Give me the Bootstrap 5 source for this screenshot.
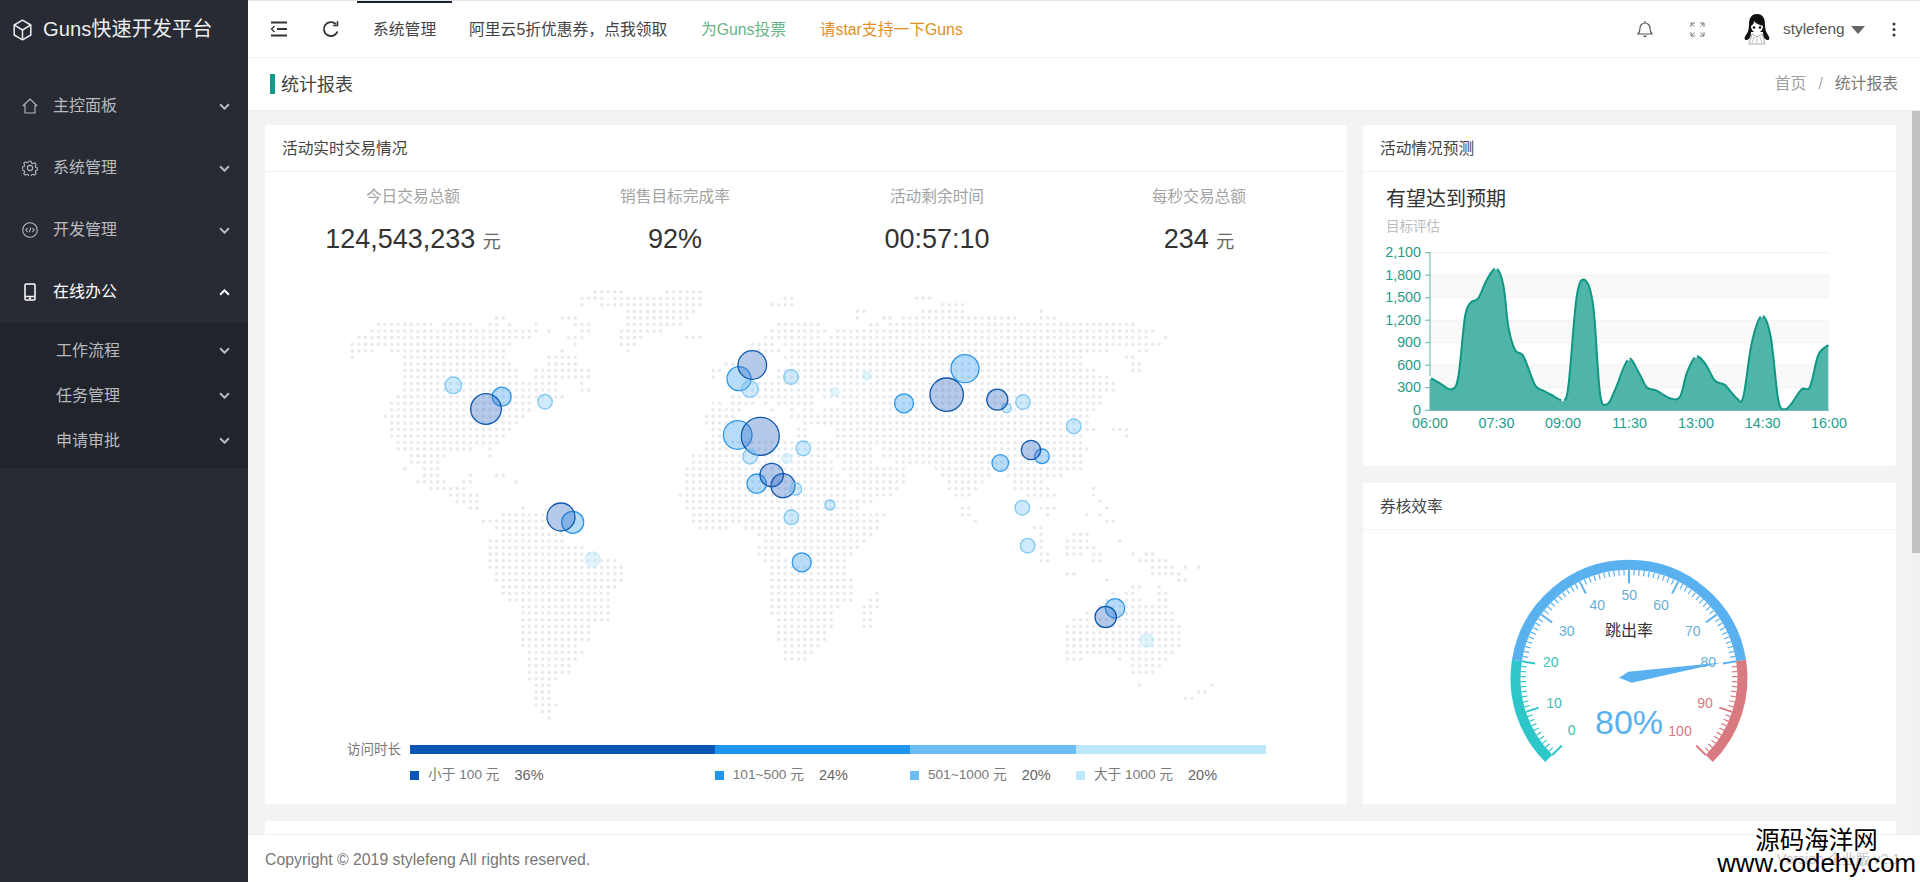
<!DOCTYPE html>
<html lang="zh-CN">
<head>
    <meta charset="UTF-8">
    <meta name="viewport" content="width=device-width, initial-scale=1.0">
    <title>统计报表 - Guns快速开发平台</title>
    <link href="https://cdn.jsdelivr.net/npm/bootstrap@5.3.3/dist/css/bootstrap.min.css" rel="stylesheet">
    <style>
        html, body { height: 100%; }
        body { font-family: "Liberation Sans", "Noto Sans CJK SC", sans-serif; background: #f3f3f3; color: #333; overflow: hidden; }
        svg { display: block; }

        .side { width: 248px; background: #282b33; color: #b8babf; }
        .side-logo { height: 58px; margin-bottom: 17px; padding: 1px 0 0 13px; gap: 11px; color: #eceded; font-size: 20.2px; }
        .side-item { height: 62px; padding: 0 18px 0 22px; gap: 15px; font-size: 16px; }
        .side-item.open { color: #fff; }
        .side-sub { background: #22242c; padding: 5px 0; }
        .side-sub > div { height: 45px; padding: 0 18px 0 56px; font-size: 16px; }
        .chev { margin-left: auto; width: 11px; height: 7px; }
        .main-col { min-width: 0; }

        .top { height: 58px; padding-left: 5px; background: #fff; border-top: 1px solid #e6e6e6; border-bottom: 1px solid #f1f1f1; }
        .top-ico { width: 52px; }
        .top-link { padding: 2px 16.8px 0; font-size: 15.8px; color: #444; }
        .top-link.active { padding: 2px 16px 0; box-shadow: inset 0 2px 0 #1a2233; }
        .link-green { color: #65b588; }
        .link-orange { color: #df8f25; }
        .top-user { width: 145px; padding-left: 20px; font-size: 15.4px; color: #555; }
        .top-avatar { margin-right: 12px; }
        .top-caret { width: 0; height: 0; margin-left: 6px; margin-top: 2px; border: 7px solid transparent; border-top: 8px solid #666; border-bottom: 0; }

        .crumbs { height: 53px; background: #fff; border-bottom: 1px solid #ececec; padding: 0 22px 0 0; }
        .crumbs-title { border-left: 5px solid #0f9d8a; padding-left: 6px; height: 20px; line-height: 22px; margin-left: 22px; font-size: 18px; color: #444; }
        .crumbs .breadcrumb { font-size: 15.8px; --bs-breadcrumb-item-padding-x: .75rem; --bs-breadcrumb-divider-color: #aaa; }
        .crumbs .breadcrumb-item { color: #a0a0a0; }
        .crumbs .breadcrumb-item.active { color: #777; }

        .page { padding: 14px 24px 16px 17px; overflow: hidden; }
        .page-bar { position: absolute; top: 0; right: 0; bottom: 0; width: 8px; background: #f1f1f1; }
        .page-thumb { height: 442px; background: #c1c1c1; }

        .box { border: 0; border-radius: 2px; }
        .box .card-header { height: 47px; padding: 0 17px; background: #fff; border-bottom: 1px solid #f3f3f3; font-size: 15.7px; line-height: 48px; color: #444; }
        .box-main { height: 679px; }
        .box-plan { height: 341px; }
        .box-rate { height: 321px; margin-top: 17px; }
        .box-next { height: 456px; margin-top: 17px; }

        .stats { height: 108px; padding: 13px 17px 0; }
        .stat-label { font-size: 15.7px; line-height: 24px; color: #a3a3a3; }
        .stat-num { font-size: 27px; line-height: 36px; margin-top: 12px; color: #333; }
        .stat-num small { font-size: 18px; color: #666; }

        .legend-label { width: 145px; padding-right: 9px; font-size: 13.5px; line-height: 9px; color: #777; }
        .legend-wrap { margin-top: 10px; padding-right: 81px; }
        .legend-bar { height: 9px; }
        .legend-row { margin-top: 12px; margin-left: 145px; font-size: 13.7px; color: #7a7a7a; line-height: 18px; }
        .legend-row i { width: 9px; height: 9px; margin-right: 9px; }
        .legend-row b { font-weight: 400; font-size: 14.5px; color: #666; margin-left: 15px; }
        .c1 { background: #0a56b4; }
        .c2 { background: #1f96f0; }
        .c3 { background: #6bbdf5; }
        .c4 { background: #bde8fb; }

        .plan-title { margin: 13px 0 0 23px; font-size: 20px; line-height: 28px; color: #333; }
        .plan-sub { margin-left: 23px; font-size: 13.5px; line-height: 27px; color: #bbb; }
        .axis-txt { font-size: 14.3px; fill: #1e9d8a; }
        .g-txt { font-size: 14px; }

        .foot { height: 48px; background: #fff; border-top: 1px solid #eee; padding: 2px 20px 0 17px; font-size: 15.8px; color: #777; }
        .foot-ver { color: #c4c4c4; font-size: 14px; }
        .watermark { position: absolute; right: 4px; bottom: 6px; color: #000; text-align: center; }
        .watermark-cn { font-size: 24.5px; line-height: 19px; }
        .watermark-en { font-size: 25.8px; line-height: 26px; }
    </style>
</head>
<body class="d-flex">
    <aside class="side flex-shrink-0">
        <div class="side-logo d-flex align-items-center">
            <svg width="19" height="22" viewBox="0 0 19 22" fill="none" stroke="currentColor" stroke-width="1.5" stroke-linejoin="round"><path d="M9.5 1.2 17.8 6v10l-8.3 4.8L1.200 16V6z"/><path d="M1.500 6.200 9.500 11l8-4.800M9.500 11v9.500"/></svg>
            <span>Guns快速开发平台</span>
        </div>
        <div class="side-item d-flex align-items-center">
            <svg width="16" height="16" viewBox="0 0 16 16" fill="none" stroke="currentColor" stroke-width="1.100"><path d="M.8 8 8 1l7.200 7M3 7v8h10V7"/></svg>
            <span>主控面板</span>
            <svg class="chev" viewBox="0 0 10 6" fill="none" stroke="currentColor" stroke-width="1.800"><path d="M1 1l4 4 4-4"/></svg>
        </div>
        <div class="side-item d-flex align-items-center">
            <svg width="16" height="16" viewBox="0 0 16 16" fill="none" stroke="currentColor" stroke-width="1.100"><circle cx="8" cy="8" r="2.600"/><path d="M6.800 .8h2.400l.4 2 1.500.7 1.800-1 1.600 1.700-1 1.700.7 1.600 2 .4v2.300l-2 .5-.7 1.500 1 1.800-1.600 1.600-1.800-1-1.500.6-.4 2.100H6.800l-.5-2.100-1.500-.6-1.800 1-1.600-1.600 1-1.800-.6-1.500-2-.5V6.900l2-.4.600-1.600-1-1.700L3 1.500l1.800 1 1.500-.7z" transform="translate(.4 .4) scale(.95)"/></svg>
            <span>系统管理</span>
            <svg class="chev" viewBox="0 0 10 6" fill="none" stroke="currentColor" stroke-width="1.800"><path d="M1 1l4 4 4-4"/></svg>
        </div>
        <div class="side-item d-flex align-items-center">
            <svg width="16" height="16" viewBox="0 0 16 16" fill="none" stroke="currentColor" stroke-width="1.100"><circle cx="8" cy="8" r="7.300"/><path d="M5.600 6 3.800 8l1.800 2M10.400 6l1.800 2-1.800 2M8.800 5.600 7.200 10.400"/></svg>
            <span>开发管理</span>
            <svg class="chev" viewBox="0 0 10 6" fill="none" stroke="currentColor" stroke-width="1.800"><path d="M1 1l4 4 4-4"/></svg>
        </div>
        <div class="side-item open d-flex align-items-center">
            <svg width="16" height="18" viewBox="0 0 16 18" fill="none" stroke="currentColor" stroke-width="1.500"><rect x="3" y="1" width="10" height="16" rx="1"/><path d="M3 13.500h10M7 15.300h2"/></svg>
            <span>在线办公</span>
            <svg class="chev" viewBox="0 0 10 6" fill="none" stroke="currentColor" stroke-width="1.800"><path d="M1 5l4-4 4 4"/></svg>
        </div>
        <div class="side-sub">
            <div class="d-flex align-items-center"><span>工作流程</span><svg class="chev" viewBox="0 0 10 6" fill="none" stroke="currentColor" stroke-width="1.800"><path d="M1 1l4 4 4-4"/></svg></div>
            <div class="d-flex align-items-center"><span>任务管理</span><svg class="chev" viewBox="0 0 10 6" fill="none" stroke="currentColor" stroke-width="1.800"><path d="M1 1l4 4 4-4"/></svg></div>
            <div class="d-flex align-items-center"><span>申请审批</span><svg class="chev" viewBox="0 0 10 6" fill="none" stroke="currentColor" stroke-width="1.800"><path d="M1 1l4 4 4-4"/></svg></div>
        </div>
    </aside>

    <div class="main-col d-flex flex-column flex-grow-1">
        <header class="top d-flex align-items-stretch flex-shrink-0">
            <div class="top-ico d-flex align-items-center justify-content-center">
                <svg width="18" height="16" viewBox="0 0 18 16" fill="none" stroke="#333" stroke-width="1.800"><path d="M1 1.500h16M7 8h10M1 14.500h16"/><path d="M4.500 5 1.500 8l3 3" stroke-width="1.300"/></svg>
            </div>
            <div class="top-ico d-flex align-items-center justify-content-center">
                <svg width="18" height="18" viewBox="0 0 18 18" fill="none" stroke="#333" stroke-width="1.800"><path d="M15.500 11.500A7 7 0 1 1 14 4.200"/><path d="M15.500 1v4.500H11" stroke-width="1.500"/></svg>
            </div>
            <a class="top-link active d-flex align-items-center text-decoration-none">系统管理</a>
            <a class="top-link d-flex align-items-center text-decoration-none">阿里云5折优惠券，点我领取</a>
            <a class="top-link link-green d-flex align-items-center text-decoration-none">为Guns投票</a>
            <a class="top-link link-orange d-flex align-items-center text-decoration-none">请star支持一下Guns</a>
            <div class="ms-auto d-flex align-items-stretch">
                <div class="top-ico d-flex align-items-center justify-content-center">
                    <svg width="16" height="18" viewBox="0 0 16 18" fill="none" stroke="#555" stroke-width="1.200"><path d="M1 14c1.500-1.500 2-2.500 2-6a5 5 0 0 1 10 0c0 3.500.5 4.500 2 6z"/><path d="M6.500 15.500a1.600 1.600 0 0 0 3 0M8 1v2"/></svg>
                </div>
                <div class="top-ico d-flex align-items-center justify-content-center">
                    <svg width="15" height="15" viewBox="0 0 15 15" fill="none" stroke="#777" stroke-width="1"><path d="M1 5V1h4M1 1l3.500 3.500M10 1h4v4M14 1l-3.500 3.500M1 10v4h4M1 14l3.500-3.500M14 10v4h-4M14 14l-3.500-3.500"/></svg>
                </div>
                <div class="top-user d-flex align-items-center">
                    <svg class="top-avatar flex-shrink-0" width="28" height="32" viewBox="0 0 28 32"><path d="M14 1C7 1 6 7 6 12c0 4-1 7-3 10-2 3-2 5 1 5 3-1 4-4 4-8h12c0 4 1 7 4 8 3 0 3-2 1-5-2-3-3-6-3-10 0-5-1-11-8-11z" fill="#111"/><path d="M8 13c2-1 3-3 3-5 2 3 6 4 9 5 0 4-3 7-6 7s-6-3-6-7z" fill="#fff"/><circle cx="11" cy="14.500" r="1.300" fill="#111"/><circle cx="17" cy="14.500" r="1.300" fill="#111"/><path d="M9 21 6 31h16l-3-10-5 3z" fill="#fff" stroke="#999" stroke-width=".8"/><path d="M11 24l-2 6M14 24v6M17 24l2 6" stroke="#aaa" stroke-width=".7"/></svg>
                    <span>stylefeng</span>
                    <span class="top-caret"></span>
                </div>
                <div class="top-ico d-flex align-items-center justify-content-center">
                    <svg width="4" height="15" viewBox="0 0 4 15" fill="#333"><circle cx="2" cy="2" r="1.500"/><circle cx="2" cy="7.500" r="1.500"/><circle cx="2" cy="13" r="1.500"/></svg>
                </div>
            </div>
        </header>

        <div class="crumbs d-flex align-items-center justify-content-between flex-shrink-0">
            <div class="crumbs-title">统计报表</div>
            <ol class="breadcrumb mb-0">
                <li class="breadcrumb-item">首页</li>
                <li class="breadcrumb-item active">统计报表</li>
            </ol>
        </div>

        <main class="page flex-grow-1 position-relative">
            <div class="page-bar"><div class="page-thumb"></div></div>
            <div class="row g-3">
                <div class="col-8">
                    <div class="card box box-main">
                        <div class="card-header">活动实时交易情况</div>
                        <div class="stats row g-0 text-center">
                            <div class="col-3">
                                <div class="stat-label">今日交易总额</div>
                                <div class="stat-num">124,543,233 <small>元</small></div>
                            </div>
                            <div class="col-3">
                                <div class="stat-label">销售目标完成率</div>
                                <div class="stat-num">92%</div>
                            </div>
                            <div class="col-3">
                                <div class="stat-label">活动剩余时间</div>
                                <div class="stat-num">00:57:10</div>
                            </div>
                            <div class="col-3">
                                <div class="stat-label">每秒交易总额</div>
                                <div class="stat-num">234 <small>元</small></div>
                            </div>
                        </div>
                        <svg id="worldMap" width="1082" height="455" viewBox="265 280 1082 455"></svg>
                        <div class="legend-wrap">
                            <div class="d-flex">
                                <div class="legend-label text-end flex-shrink-0">访问时长</div>
                                <div class="legend-bar d-flex flex-grow-1">
                                    <div class="c1" style="width:35.6%"></div>
                                    <div class="c2" style="width:22.8%"></div>
                                    <div class="c3" style="width:19.4%"></div>
                                    <div class="c4" style="width:22.2%"></div>
                                </div>
                            </div>
                            <div class="legend-row d-flex">
                                <div class="d-flex align-items-center" style="width:35.6%"><i class="c1"></i>小于 100 元<b>36%</b></div>
                                <div class="d-flex align-items-center" style="width:22.8%"><i class="c2"></i>101~500 元<b>24%</b></div>
                                <div class="d-flex align-items-center" style="width:19.4%"><i class="c3"></i>501~1000 元<b>20%</b></div>
                                <div class="d-flex align-items-center" style="width:22.2%"><i class="c4"></i>大于 1000 元<b>20%</b></div>
                            </div>
                        </div>
                    </div>
                </div>
                <div class="col-4">
                    <div class="card box box-plan">
                        <div class="card-header">活动情况预测</div>
                        <div class="plan-title">有望达到预期</div>
                        <div class="plan-sub">目标评估</div>
                        <svg id="planChart" width="533" height="200" viewBox="1363 240 533 200">
                            <rect x="1430" y="275" width="399" height="22.500" fill="#f9f9f9"/>
                            <rect x="1430" y="320" width="399" height="22.500" fill="#f9f9f9"/>
                            <rect x="1430" y="365" width="399" height="22.500" fill="#f9f9f9"/>
                            <path d="M1430 252.700H1829M1430 275.200H1829M1430 297.700H1829M1430 320.200H1829M1430 342.700H1829M1430 365.200H1829M1430 387.700H1829" stroke="#f1f1f1"/>
                            <path id="planArea" fill="#4fb5a9"/>
                            <path id="planLine" fill="none" stroke="#0f9783" stroke-width="2"/>
                            <path d="M1430 252V410.300H1829" fill="none" stroke="#5fb5a6"/>
                            <path d="M1425 252.700h5M1425 275.200h5M1425 297.700h5M1425 320.200h5M1425 342.700h5M1425 365.200h5M1425 387.700h5M1425 410.300h5" stroke="#5fb5a6"/>
                            <g id="planDots" fill="#fff"></g>
                            <g class="axis-txt" text-anchor="end">
                                <text x="1421" y="257">2,100</text>
                                <text x="1421" y="280">1,800</text>
                                <text x="1421" y="302">1,500</text>
                                <text x="1421" y="325">1,200</text>
                                <text x="1421" y="347">900</text>
                                <text x="1421" y="370">600</text>
                                <text x="1421" y="392">300</text>
                                <text x="1421" y="415">0</text>
                            </g>
                            <g class="axis-txt" text-anchor="middle">
                                <text x="1430" y="428">06:00</text>
                                <text x="1496.500" y="428">07:30</text>
                                <text x="1563" y="428">09:00</text>
                                <text x="1629.600" y="428">11:30</text>
                                <text x="1696" y="428">13:00</text>
                                <text x="1762.700" y="428">14:30</text>
                                <text x="1829" y="428">16:00</text>
                            </g>
                        </svg>
                    </div>
                    <div class="card box box-rate">
                        <div class="card-header">券核效率</div>
                        <svg id="gauge" width="533" height="273" viewBox="1363 530 533 273">
                            <g id="gaugeArcs" fill="none"></g>
                            <g class="g-txt" text-anchor="middle" fill="#3dbfb5">
                                <text x="1571.700" y="735">0</text>
                                <text x="1554" y="708">10</text>
                                <text x="1550.700" y="667">20</text>
                            </g>
                            <g class="g-txt" text-anchor="middle" fill="#6aaed6">
                                <text x="1566.700" y="636">30</text>
                                <text x="1597.300" y="610">40</text>
                                <text x="1629.300" y="600">50</text>
                                <text x="1661" y="610">60</text>
                                <text x="1692.700" y="636">70</text>
                                <text x="1708.300" y="667">80</text>
                            </g>
                            <g class="g-txt" text-anchor="middle" fill="#d87a80">
                                <text x="1705" y="708">90</text>
                                <text x="1680" y="736">100</text>
                            </g>
                            <polygon points="1722,662.500 1628.300,671.700 1619,677.700 1631.700,682.700" fill="#5ab1ef"/>
                            <text x="1629" y="636" text-anchor="middle" font-size="16" fill="#333">跳出率</text>
                            <text x="1629" y="734" text-anchor="middle" font-size="34" fill="#5ab1ef">80%</text>
                        </svg>
                    </div>
                </div>
            </div>
            <div class="card box box-next"></div>
        </main>

        <footer class="foot d-flex align-items-center justify-content-between flex-shrink-0 position-relative">
            <span>Copyright © 2019 stylefeng All rights reserved.</span>
            <span class="foot-ver">Version 企业版 v2.1</span>
            <div class="watermark">
                <div class="watermark-cn">源码海洋网</div>
                <div class="watermark-en">www.codehy.com</div>
            </div>
        </footer>
    </div>

    <script>
        const NS = 'http://www.w3.org/2000/svg';
        function add(parent, tag, attrs) {
            const el = document.createElementNS(NS, tag);
            for (const k in attrs) el.setAttribute(k, attrs[k]);
            parent.appendChild(el);
            return el;
        }

        // world map: one string per dot row, "from-to" column runs
        const mapRows = [
            '37-41 48-53', '35-38 40-53 66-67 86-88', '35 38-53 64-67 90-93', '42-52 77-78 87-93 105',
            '22-23 32-34 42-51 77 81-82 84-101 105-107', '4-12 14-18 21-22 24 28 34-36 42-50 65-71 79-80 82-119',
            '3-28 30 35-36 41-47 64-72 74-122', '1-27 33-35 41-44 51-53 63-71 73-121 124',
            '0-24 34 41-43 61-64 66-123', '0-3 6-23 32 42 62-65 67-115 120-121', '0 8-23 30-34 66-111 118-119',
            '8-24 30-34 57-58 67-111 119-120', '8-25 28-36 55-56 65-113 119-120', '8-25 28-36 55 65-115',
            '8-31 35 60-116', '8-31 35-36 60-73 75-116', '7-32 58-70 72-114', '6-27 55-56 58-61 63 65-70 75-114',
            '6-27 55-59 64 67 69-70 72-113', '5-26 54-58 67-112', '6-25 54-58 69-112', '6-24 55-56 68-69 74-112 113 116-118',
            '6-23 55-56 68-69 74-111 118', '7-22 54-111', '7-18 21 54-69 71-79 81-112', '9-14 21 52-72 74-79 81-111',
            '9-13 52-73 75-79 83-111', '8 11-13 51-73 75-84 89-111', '11-13 18 22-23 51-74 76-84 90-97 100-108',
            '10-14 17-18 25 51-75 76-84 91-96 101-105', '12-17 51-75 77-83 91-95 101-106 113',
            '15-19 50-75 78-82 92-94 103-107 113', '16-19 51-79 114', '18-19 26 51-77 93-94 105-107 115',
            '23-29 52-81 93-94 106 112 114', '20-29 52-80 95 115-116', '22-29 53-57 60-80 104-105',
            '23-32 62-79 105 110-112', '21-32 63-78 105 109-112 117', '21-35 62-77 105 109-113',
            '21-37 62-65 69-76 105-106 109-111 113-114 119 121-122', '21-40 63-66 70-75 105-106 113-114 120-124',
            '21-41 64-75 122-125 127 129', '22-41 64-75 109-110 122-126', '22-41 64-76 115 126-127',
            '23-40 64-76 119-120 123', '23-39 64-76 80 116 118-119 123-124', '24-39 64-76 79-80 115-120 123-124',
            '26-39 64-74 78-80 114-124', '26-39 64-73 78-79 112 115-125', '26-39 65-73 78-79 110-112 114-125',
            '26-36 65-73 78-79 109-126', '26-36 65-72 109-126', '26-36 65-72 109-126', '26-34 66-71 109-126',
            '27-35 66-70 109-125', '27-34 66-69 109-111 117 119-124', '27-33 119-123', '27-33 119-122', '27-31',
            '28-30 120 131', '28-30 129-130', '28-30 127-128', '28-31', '29-30', '30'
        ];
        const map = document.getElementById('worldMap');
        const dots = add(map, 'g', { fill: '#e7eaef' });
        mapRows.forEach((row, r) => {
            row.split(' ').forEach(run => {
                const [a, b] = run.split('-').map(Number);
                for (let c = a; c <= (b === undefined ? a : b); c++) {
                    add(dots, 'circle', { cx: (352.3 + 6.56 * c).toFixed(1), cy: (291.7 + 6.56 * r).toFixed(1), r: 1.8 });
                }
            });
        });

        // bubbles: x, y, r, kind
        const kinds = {
            d: { fill: 'rgba(30,90,190,.33)', stroke: '#0f58ac' },
            m: { fill: 'rgba(35,150,240,.33)', stroke: '#2b97e8' },
            l: { fill: 'rgba(115,195,245,.35)', stroke: 'rgba(100,190,240,.8)' },
            f: { fill: 'rgba(170,225,250,.35)', stroke: 'rgba(170,225,250,.4)' }
        };
        [
            [453.3, 385.3, 8.3, 'l'], [501.7, 396.7, 9.5, 'm'], [486, 409, 15.3, 'd'], [545, 401.7, 7.3, 'l'],
            [739, 378.7, 12, 'm'], [750, 389, 8.3, 'l'], [752.3, 365, 14.3, 'd'], [791, 377, 7.3, 'l'],
            [737.7, 435, 14.3, 'm'], [760.3, 436.3, 19, 'd'], [750, 456.7, 7.3, 'l'], [803.3, 448.3, 7.3, 'l'],
            [756.7, 483.7, 9.7, 'm'], [771.7, 475, 11.7, 'd'], [783, 485.7, 12, 'd'], [795.7, 489, 6, 'l'], [786.7, 458.3, 5, 'f'],
            [965, 368.7, 14, 'm'], [946.7, 394.7, 16.7, 'd'], [904, 403.3, 9.5, 'm'], [1006.7, 408, 4.7, 'l'], [997.3, 399.7, 10.5, 'd'],
            [1023, 402, 7.3, 'l'], [1073.7, 426.3, 7.3, 'l'], [1042, 456.3, 7.3, 'm'], [1031, 450, 9.7, 'd'], [1000.3, 463, 8.3, 'm'],
            [866.7, 375.7, 4, 'f'], [835, 392, 4, 'f'], [1022.3, 507.7, 7.3, 'l'], [830, 505, 5, 'l'],
            [572.7, 522.3, 11, 'm'], [561, 517, 14, 'd'], [592.7, 559.3, 7.5, 'f'], [791.3, 517.3, 7.3, 'l'], [801.7, 562.3, 9.5, 'm'],
            [1027.7, 545.7, 7.3, 'l'], [1115, 608.3, 9.7, 'm'], [1105.7, 617, 10.7, 'd'], [1146.7, 640.3, 6.7, 'f']
        ].forEach(([x, y, r, k]) => {
            add(map, 'circle', { cx: x, cy: y, r: r, fill: kinds[k].fill, stroke: kinds[k].stroke, 'stroke-width': 1.3 });
        });

        // forecast curve, points read off the picture in real px
        const curve = [
            [150,443],[180,460],[215,478],[235,440],[255,260],[272,218],[295,205],[320,150],[348,115],[370,165],[385,290],
            [405,360],[430,378],[465,465],[490,482],[515,495],[548,510],[565,470],[590,200],[615,150],[640,230],[660,490],
            [682,522],[705,480],[745,388],[775,425],[800,472],[830,482],[870,505],[900,500],[920,430],[947,380],[975,400],
            [1005,452],[1035,465],[1070,505],[1090,500],[1115,340],[1145,258],[1172,320],[1195,510],[1215,538],[1235,520],
            [1265,478],[1290,470],[1315,375],[1345,345]
        ].map(([x, y]) => [1380 + x / 3, 230 + y / 3]);
        let line = `M${curve[0][0]} ${curve[0][1]}`;
        for (let i = 0; i < curve.length - 1; i++) {
            const p0 = curve[i - 1] || curve[i], p1 = curve[i], p2 = curve[i + 1], p3 = curve[i + 2] || p2;
            const c1 = [p1[0] + (p2[0] - p0[0]) / 6, p1[1] + (p2[1] - p0[1]) / 6];
            const c2 = [p2[0] - (p3[0] - p1[0]) / 6, p2[1] - (p3[1] - p1[1]) / 6];
            line += `C${c1[0].toFixed(1)} ${c1[1].toFixed(1)} ${c2[0].toFixed(1)} ${c2[1].toFixed(1)} ${p2[0].toFixed(1)} ${p2[1].toFixed(1)}`;
        }
        document.getElementById('planLine').setAttribute('d', line);
        document.getElementById('planArea').setAttribute('d', line + 'V410.3H1430Z');
        [0, 8, 16, 24, 31, 38].forEach(i => {
            add(document.getElementById('planDots'), 'circle', { cx: curve[i][0], cy: curve[i][1], r: 1.4 });
        });

        // gauge
        const cx = 1629, cy = 678.3, R = 113.5;
        const pt = (v, r) => {
            const a = (225 - v * 2.7) * Math.PI / 180;
            return [(cx + r * Math.cos(a)).toFixed(2), (cy - r * Math.sin(a)).toFixed(2)];
        };
        const arcs = document.getElementById('gaugeArcs');
        const section = v => v <= 20 ? '#2ec7c9' : v <= 80 ? '#5ab1ef' : '#d87a80';
        [[0, 20], [20, 80], [80, 100]].forEach(([a, b]) => {
            const p = pt(a, R), q = pt(b, R);
            add(arcs, 'path', { d: `M${p}A${R} ${R} 0 ${(b - a) * 2.7 > 180 ? 1 : 0} 1 ${q}`, stroke: section(b), 'stroke-width': 10 });
        });
        for (let v = 0; v <= 100; v++) {
            const major = v % 10 === 0;
            const p = pt(v, 108.5), q = pt(v, major ? 95 : 103);
            add(arcs, 'line', { x1: p[0], y1: p[1], x2: q[0], y2: q[1], stroke: section(v), 'stroke-width': major ? 2 : 1.2 });
        }
    </script>
    <script src="https://cdn.jsdelivr.net/npm/bootstrap@5.3.3/dist/js/bootstrap.bundle.min.js"></script>
</body>
</html>
